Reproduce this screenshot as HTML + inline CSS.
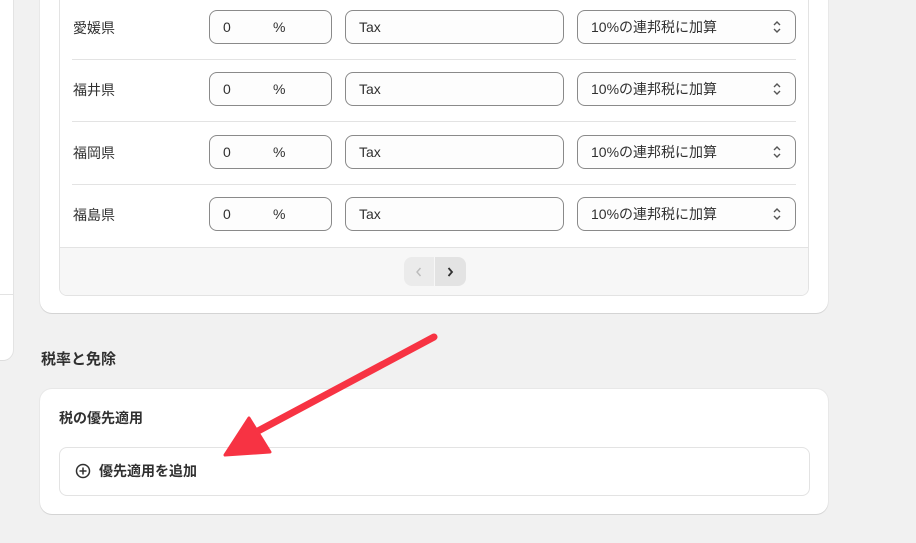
<html><head><style>
body{margin:0;width:916px;height:543px;background:#f1f1f1;font-family:"Liberation Sans","Noto Sans CJK JP",sans-serif;position:relative;overflow:hidden;color:#303030}
.a{position:absolute;box-sizing:border-box}
.in{position:absolute;box-sizing:border-box;border:1px solid #8a8a8a;border-radius:8px;background:#fdfdfd;height:34px;font-size:14px;line-height:33px;padding-left:13px;color:#303030}
.lab{position:absolute;left:73px;font-size:14px;color:#303030}
.sep{position:absolute;left:72px;width:724px;height:1px;background:#e3e3e3}
</style></head><body>
<div class="a" style="left:0;top:0;width:13px;height:360px;background:#fff;border-radius:0 0 10px 0;box-shadow:0 1px 0 #ddd,1px 0 0 #e3e3e3"></div>
<div class="a" style="left:0;top:294px;width:13px;height:1px;background:#e3e3e3"></div>
<div class="a" style="left:40px;top:-20px;width:788px;height:333px;background:#fff;border-radius:12px;box-shadow:0 1px 0 #d4d4d4,0 0 0 1px #e8e8e8"></div>
<div class="a" style="left:59px;top:-20px;width:750px;height:316px;border:1px solid #e3e3e3;border-radius:8px;overflow:hidden">
<div class="a" style="left:0;top:266px;width:750px;height:50px;background:#f7f7f7;border-top:1px solid #e3e3e3"></div>
</div>
<div class="a" style="left:404px;top:257px;width:30px;height:29px;background:#ebebeb;border-radius:8px 0 0 8px"><svg style="position:absolute;left:10px;top:9px" width="10" height="12" viewBox="0 0 10 12"><path d="M6.5 2L3 6l3.5 4" fill="none" stroke="#bbb" stroke-width="1.4"/></svg></div>
<div class="a" style="left:435px;top:257px;width:31px;height:29px;background:#e3e3e3;border-radius:0 8px 8px 0"><svg style="position:absolute;left:10px;top:9px" width="10" height="12" viewBox="0 0 10 12"><path d="M3.5 2L7 6l-3.5 4" fill="none" stroke="#303030" stroke-width="1.8"/></svg></div>
<div class="sep" style="top:59px"></div><div class="sep" style="top:121px"></div><div class="sep" style="top:184px"></div>

<div class="lab" style="top:18px">愛媛県</div>
<div class="lab" style="top:80px">福井県</div>
<div class="lab" style="top:143px">福岡県</div>
<div class="lab" style="top:205px">福島県</div>

<div class="in" style="left:209px;top:10px;width:123px">0<span style="position:absolute;left:63px">%</span></div>
<div class="in" style="left:209px;top:72px;width:123px">0<span style="position:absolute;left:63px">%</span></div>
<div class="in" style="left:209px;top:135px;width:123px">0<span style="position:absolute;left:63px">%</span></div>
<div class="in" style="left:209px;top:197px;width:123px">0<span style="position:absolute;left:63px">%</span></div>
<div class="in" style="left:345px;top:10px;width:219px">Tax</div>
<div class="in" style="left:345px;top:72px;width:219px">Tax</div>
<div class="in" style="left:345px;top:135px;width:219px">Tax</div>
<div class="in" style="left:345px;top:197px;width:219px">Tax</div>
<div class="in" style="left:577px;top:10px;width:219px">10%の連邦税に加算<svg style="position:absolute;right:13px;top:9px" width="10" height="14" viewBox="0 0 10 14"><path d="M2 5l3-3 3 3M2 9l3 3 3-3" fill="none" stroke="#555" stroke-width="1.4"/></svg></div>
<div class="in" style="left:577px;top:72px;width:219px">10%の連邦税に加算<svg style="position:absolute;right:13px;top:9px" width="10" height="14" viewBox="0 0 10 14"><path d="M2 5l3-3 3 3M2 9l3 3 3-3" fill="none" stroke="#555" stroke-width="1.4"/></svg></div>
<div class="in" style="left:577px;top:135px;width:219px">10%の連邦税に加算<svg style="position:absolute;right:13px;top:9px" width="10" height="14" viewBox="0 0 10 14"><path d="M2 5l3-3 3 3M2 9l3 3 3-3" fill="none" stroke="#555" stroke-width="1.4"/></svg></div>
<div class="in" style="left:577px;top:197px;width:219px">10%の連邦税に加算<svg style="position:absolute;right:13px;top:9px" width="10" height="14" viewBox="0 0 10 14"><path d="M2 5l3-3 3 3M2 9l3 3 3-3" fill="none" stroke="#555" stroke-width="1.4"/></svg></div>

<div class="a" style="left:41px;top:348px;font-size:15px;font-weight:bold">税率と免除</div>
<div class="a" style="left:40px;top:389px;width:788px;height:125px;background:#fff;border-radius:12px;box-shadow:0 1px 0 #d4d4d4,0 0 0 1px #e8e8e8"></div>
<div class="a" style="left:59px;top:408px;font-size:14px;font-weight:bold">税の優先適用</div>
<div class="a" style="left:59px;top:447px;width:751px;height:49px;border:1px solid #e3e3e3;border-radius:8px"></div>
<svg class="a" style="left:75px;top:463px" width="16" height="16" viewBox="0 0 16 16"><circle cx="8" cy="8" r="6.5" fill="none" stroke="#303030" stroke-width="1.5"/><path d="M8 4.5v7M4.5 8h7" stroke="#303030" stroke-width="1.5"/></svg>
<div class="a" style="left:99px;top:461px;font-size:14px;font-weight:bold">優先適用を追加</div>
<svg class="a" style="left:0;top:0" width="916" height="543"><path d="M434 337L258 431" stroke="#f73343" stroke-width="7" stroke-linecap="round"/><polygon points="225,455 249,418 270,452" fill="#f73343" stroke="#f73343" stroke-width="3" stroke-linejoin="round"/></svg>
</body></html>
